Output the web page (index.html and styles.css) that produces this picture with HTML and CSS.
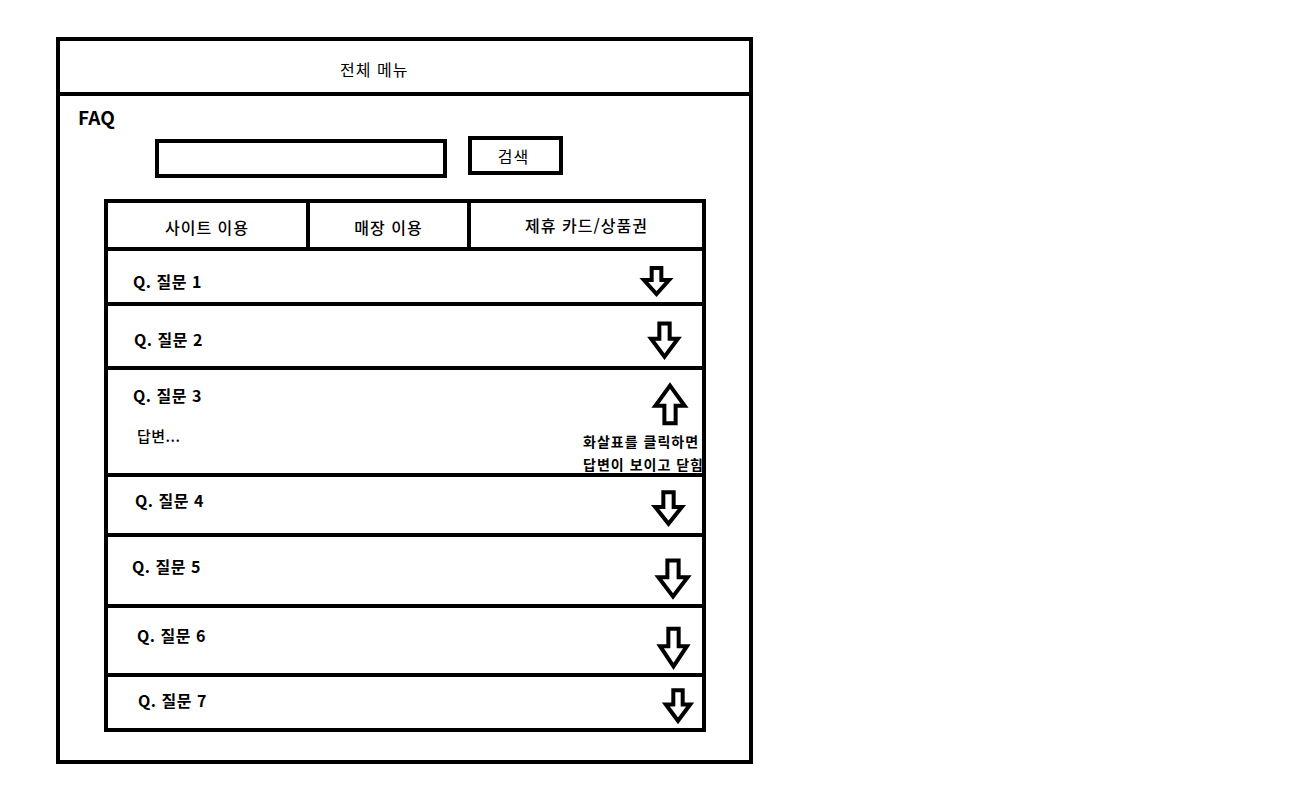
FILE: index.html
```html
<!DOCTYPE html>
<html lang="ko">
<head>
    <meta charset="UTF-8">
    <title>FAQ</title>
    <link rel="stylesheet" href="styles.css">
</head>
<body>
    <div class="frame">
        <div class="top-menu">전체 메뉴</div>
        <div class="faq-body">
            <h2 class="faq-title">FAQ</h2>
            <div class="search-row">
                <input type="text" class="search-input">
                <button class="search-btn">검색</button>
            </div>
            <div class="faq-box">
                <div class="tabs">
                    <div class="tab">사이트 이용</div>
                    <div class="tab">매장 이용</div>
                    <div class="tab">제휴 카드/상품권</div>
                </div>
                <div class="faq-list">
                    <div class="faq-row">
                        <div class="q-col"><span class="question">Q. 질문 1</span></div>
                        <svg class="arrow" width="31" height="30" viewBox="0 0 32 32" preserveAspectRatio="none"><path d="M11 2H21V15H29L16 30L3 15H11Z"/></svg>
                    </div>
                    <div class="faq-row">
                        <div class="q-col"><span class="question">Q. 질문 2</span></div>
                        <svg class="arrow" width="33" height="38" viewBox="0 0 32 32" preserveAspectRatio="none"><path d="M11 2H21V15H29L16 30L3 15H11Z"/></svg>
                    </div>
                    <div class="faq-row open">
                        <div class="q-col">
                            <span class="question">Q. 질문 3</span>
                            <p class="answer">답변...</p>
                        </div>
                        <div class="side-col">
                            <svg class="arrow" width="36" height="43" viewBox="0 0 32 32" preserveAspectRatio="none"><path d="M11 30H21V17H29L16 2L3 17H11Z"/></svg>
                            <p class="note">화살표를 클릭하면<br>답변이 보이고 닫힘</p>
                        </div>
                    </div>
                    <div class="faq-row">
                        <div class="q-col"><span class="question">Q. 질문 4</span></div>
                        <svg class="arrow" width="33" height="36" viewBox="0 0 32 32" preserveAspectRatio="none"><path d="M11 2H21V15H29L16 30L3 15H11Z"/></svg>
                    </div>
                    <div class="faq-row">
                        <div class="q-col"><span class="question">Q. 질문 5</span></div>
                        <svg class="arrow" width="36" height="41" viewBox="0 0 32 32" preserveAspectRatio="none"><path d="M11 2H21V15H29L16 30L3 15H11Z"/></svg>
                    </div>
                    <div class="faq-row">
                        <div class="q-col"><span class="question">Q. 질문 6</span></div>
                        <svg class="arrow" width="33" height="43" viewBox="0 0 32 32" preserveAspectRatio="none"><path d="M11 2H21V15H29L16 30L3 15H11Z"/></svg>
                    </div>
                    <div class="faq-row">
                        <div class="q-col"><span class="question">Q. 질문 7</span></div>
                        <svg class="arrow" width="30" height="35" viewBox="0 0 32 32" preserveAspectRatio="none"><path d="M11 2H21V15H29L16 30L3 15H11Z"/></svg>
                    </div>
                </div>
            </div>
        </div>
    </div>
</body>
</html>
```

FILE: styles.css
```css
body, html {
    margin: 0;
    padding: 0;
    background-color: #fff;
    color: #000;
    font-family: "Noto Sans CJK KR", "Noto Sans", sans-serif;
}
.frame {
    box-sizing: border-box;
    width: 697px;
    height: 727px;
    margin: 37px 0 0 56px;
    border: 4px solid #000;
    display: flex;
    flex-direction: column;
}
.top-menu {
    box-sizing: border-box;
    height: 55px;
    border-bottom: 4px solid #000;
    display: flex;
    align-items: center;
    padding: 4px 0 0 280px;
    font-size: 16px;
    letter-spacing: 1px;
}
.faq-body {
    padding: 9px 0 0 18px;
}
.faq-title {
    margin: 0;
    font-size: 19px;
    line-height: 24px;
    font-weight: 700;
}
.search-row {
    display: flex;
    align-items: flex-start;
    gap: 21px;
    margin: 7px 0 0 77px;
}
.search-input {
    box-sizing: border-box;
    width: 292px;
    height: 39px;
    margin-top: 3px;
    border: 4px solid #000;
    border-radius: 0;
    padding: 0 8px;
    outline: none;
}
.search-btn {
    box-sizing: border-box;
    width: 95px;
    height: 39px;
    border: 4px solid #000;
    border-radius: 0;
    background: #fff;
    font-family: inherit;
    font-size: 16px;
    letter-spacing: 1px;
    color: #000;
    padding: 0 4px 0 0;
}
.faq-box {
    box-sizing: border-box;
    width: 602px;
    height: 533px;
    margin: 21px 0 0 26px;
    border: 4px solid #000;
}
.tabs {
    display: grid;
    grid-template-columns: 202px 161px 231px;
    height: 44px;
    border-bottom: 4px solid #000;
}
.tab {
    display: flex;
    align-items: center;
    justify-content: center;
    padding-top: 3px;
    font-size: 16px;
    letter-spacing: 1px;
    font-weight: 500;
}
.tab:nth-child(3) {
    padding-top: 0;
}
.tab:nth-child(1),
.tab:nth-child(2) {
    border-right: 4px solid #000;
}
.faq-row {
    display: flex;
    justify-content: space-between;
    align-items: flex-start;
    border-bottom: 4px solid #000;
}
.faq-row:last-child {
    border-bottom: none;
}
.question {
    display: block;
    font-size: 16px;
    line-height: 20px;
    letter-spacing: 0.5px;
    font-weight: 700;
}
.arrow {
    overflow: visible;
    flex-shrink: 0;
}
.arrow path {
    fill: #fff;
    stroke: #000;
    stroke-width: 4px;
    stroke-linejoin: miter;
    vector-effect: non-scaling-stroke;
}
.answer {
    margin: 21px 0 0 4px;
    font-size: 15px;
    line-height: 20px;
    letter-spacing: 0.5px;
    font-weight: 500;
}
.side-col {
    display: flex;
    flex-direction: column;
    align-items: flex-end;
}
.note {
    margin: 4px -2px 0 0;
    font-size: 14px;
    line-height: 23px;
    letter-spacing: 1px;
    font-weight: 700;
}

/* hand drawn rows: each one a little different */
.faq-row:nth-child(1) { height: 51px; }
.faq-row:nth-child(1) .q-col { margin: 20px 0 0 25px; }
.faq-row:nth-child(1) .arrow { margin: 15px 30px 0 0; }
.faq-row:nth-child(2) { height: 60px; }
.faq-row:nth-child(2) .q-col { margin: 23px 0 0 26px; }
.faq-row:nth-child(2) .arrow { margin: 15px 21px 0 0; }
.faq-row:nth-child(3) { height: 103px; }
.faq-row:nth-child(3) .q-col { margin: 15px 0 0 25px; }
.faq-row:nth-child(3) .arrow { margin: 13px 14px 0 0; }
.faq-row:nth-child(4) { height: 56px; }
.faq-row:nth-child(4) .q-col { margin: 13px 0 0 27px; }
.faq-row:nth-child(4) .arrow { margin: 13px 17px 0 0; }
.faq-row:nth-child(5) { height: 67px; }
.faq-row:nth-child(5) .q-col { margin: 19px 0 0 24px; }
.faq-row:nth-child(5) .arrow { margin: 21px 11px 0 0; }
.faq-row:nth-child(6) { height: 65px; }
.faq-row:nth-child(6) .q-col { margin: 17px 0 0 29px; }
.faq-row:nth-child(6) .arrow { margin: 18px 12px 0 0; }
.faq-row:nth-child(7) { height: 51px; }
.faq-row:nth-child(7) .q-col { margin: 13px 0 0 30px; }
.faq-row:nth-child(7) .arrow { margin: 11px 9px 0 0; }
```
